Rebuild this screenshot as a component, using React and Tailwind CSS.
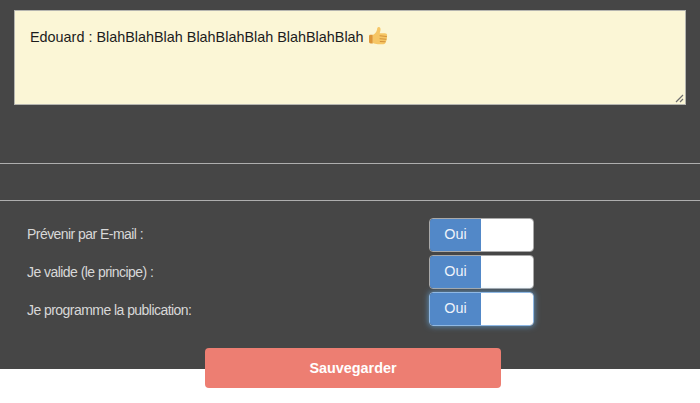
import React from 'react';

const rows = [
  { label: 'Prévenir par E-mail :', focus: false },
  { label: 'Je valide (le principe) :', focus: false },
  { label: 'Je programme la publication:', focus: true },
];

function Thumb() {
  return (
    <svg width="20" height="20" viewBox="0 0 19 19" className="ml-[4px] mt-[-3px] shrink-0">
      <path d="M1 9.5 C1 8.6 1.6 8.2 2.4 8.2 L4.6 8.2 L4.6 16.6 L2.6 16.6 C1.6 16.6 1 16 1 15 Z" fill="#dd9638" />
      <path d="M4.6 8.6 C6.6 7.4 8.2 5.6 8.6 3.4 C8.8 2.2 9 1 10.2 1 C11.6 1 12.1 2.4 11.9 3.9 C11.8 5 11.4 5.9 11.1 6.8 L16 6.8 C17.4 6.8 18.2 7.6 18.2 8.6 C18.2 9.3 17.9 9.7 17.6 10 C18 10.4 18.2 10.8 18.1 11.4 C18 12 17.7 12.3 17.3 12.6 C17.6 13 17.7 13.5 17.5 14 C17.3 14.5 17 14.8 16.5 15 C16.7 15.4 16.7 15.9 16.4 16.4 C16 17 15.3 17.3 14.4 17.3 L9.4 17.3 C7.4 17.3 6 16.8 4.6 16.2 Z" fill="#f6c665" />
      <path d="M11.4 9.3 L17.6 10 M11.4 12.1 L17.3 12.6 M11.6 14.7 L16.5 15" stroke="#d08f38" strokeWidth="0.9" fill="none" strokeLinecap="round" />
    </svg>
  );
}

function Toggle({ focus }) {
  return (
    <div className={`flex h-[34px] w-[105px] overflow-hidden rounded-[4px] border ${focus ? 'border-[#8fb8e4] shadow-[0_0_6px_rgba(102,175,233,0.8)]' : 'border-[#a9a9a9]'}`}>
      <div className="flex w-[51px] items-center justify-center bg-[#5288c8] text-[14.4px] text-[#eef3fa]">Oui</div>
      <div className="flex-1 bg-white" />
    </div>
  );
}

export default function App() {
  return (
    <div className="h-[403px] w-[700px] overflow-hidden bg-white font-['Liberation_Sans',Arial,sans-serif]">
      <div className="h-[369px] bg-[#464646] pt-[10px]">
        <div className="relative mx-[14px] h-[95px] border border-[#b5b5b0] bg-[#fbf6d6] pl-[15px] pt-[16px]">
          <div className="flex items-center text-[14.4px] leading-[20px] text-[#1c1c1c]">
            Edouard : BlahBlahBlah BlahBlahBlah BlahBlahBlah
            <Thumb />
          </div>
          {/* poignée du textarea */}
          <svg width="9" height="9" viewBox="0 0 9 9" className="absolute bottom-[1px] right-[1px]">
            <path d="M1 8 L8 1 M5 8 L8 5" stroke="#6e6e6e" strokeWidth="1.2" />
          </svg>
        </div>

        <div className="mt-[58px] h-[38px] border-y border-[#aeaeae]" />

        <div className="mt-[16px] flex justify-between pl-[27px] pr-[166px]">
          <div className="flex flex-col">
            {rows.map((row) => (
              <div key={row.label} className="flex h-[38px] items-center pb-[4px] text-[14px] font-light tracking-[-0.55px] text-[#d8d8d8]">
                {row.label}
              </div>
            ))}
          </div>
          <div className="flex flex-col gap-[3px] pt-[1px]">
            {rows.map((row) => (
              <Toggle key={row.label} focus={row.focus} />
            ))}
          </div>
        </div>

        <div className="mt-[17px] pl-[205px]">
          <button className="h-[40px] w-[296px] rounded-[4px] bg-[#ed7e72] pt-[1px] text-[14.4px] font-bold text-white">
            Sauvegarder
          </button>
        </div>
      </div>
    </div>
  );
}
